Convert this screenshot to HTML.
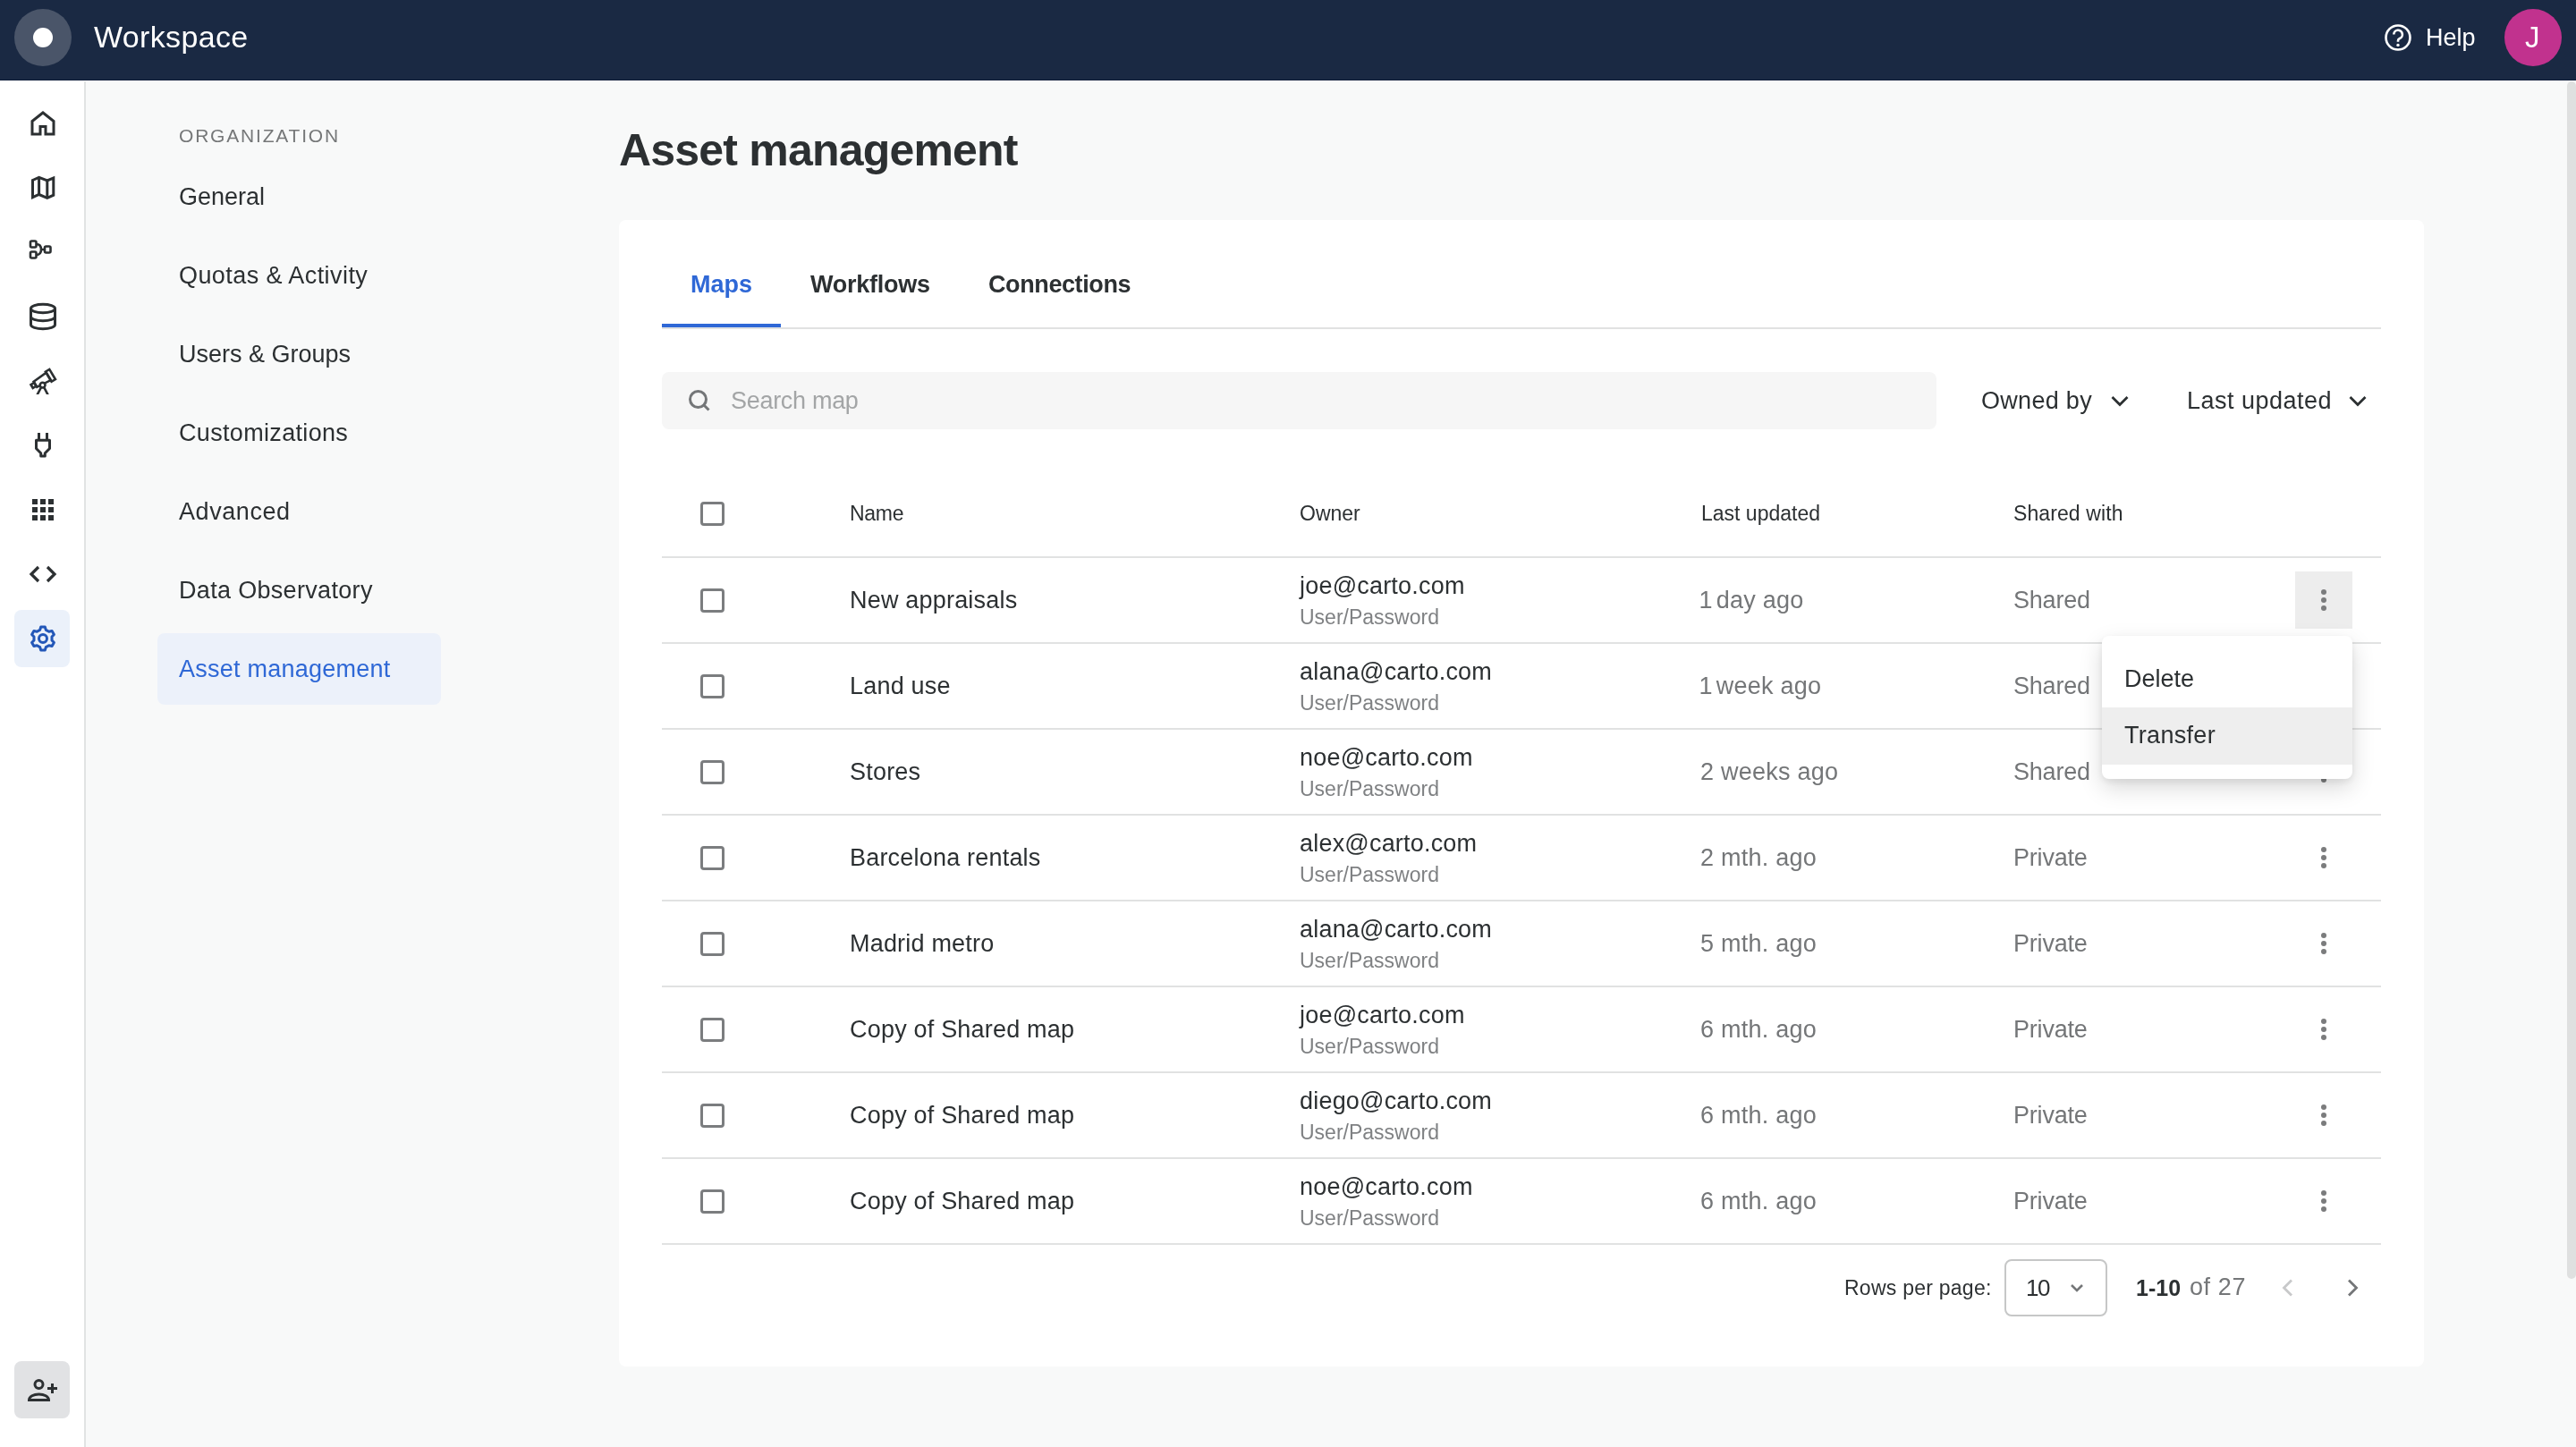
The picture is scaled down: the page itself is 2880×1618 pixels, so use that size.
<!DOCTYPE html><html><head><meta charset="utf-8"><style>
html,body{margin:0;padding:0;width:2880px;height:1618px;overflow:hidden;background:#f8f9f9;font-family:"Liberation Sans",sans-serif;}
@media (max-width:1500px){html{zoom:0.5;}}
.t{position:absolute;white-space:nowrap;will-change:transform;}
.a{position:absolute;}
</style></head><body>
<div class="a" style="left:0;top:0;width:2880px;height:89px;background:#1a2943"></div><div class="a" style="left:0;top:89px;width:2880px;height:1px;background:#0e1c38"></div><div class="a" style="left:0;top:90px;width:2880px;height:1px;background:#ffffff"></div><div class="a" style="left:16px;top:10px;width:64px;height:64px;border-radius:50%;background:#4a5569"></div><div class="a" style="left:37px;top:31px;width:22px;height:22px;border-radius:50%;background:#ffffff"></div><div class="t" style="left:105px;top:24.21px;font-size:34px;line-height:34px;color:#ffffff;letter-spacing:0.35px;">Workspace</div>
<svg class="a" style="left:2660px;top:21px" width="42" height="42" viewBox="0 0 42 42"><circle cx="21" cy="21" r="13.5" fill="none" stroke="#fff" stroke-width="2.6"/><path d="M16.3 17.6a4.8 4.8 0 1 1 6.6 4.4c-1.2.5-1.9 1.3-1.9 2.6v1.1" fill="none" stroke="#fff" stroke-width="2.6"/><circle cx="21" cy="29.4" r="1.7" fill="#fff"/></svg><div class="t" style="left:2712px;top:28.74px;font-size:27px;line-height:27px;color:#ffffff;">Help</div>
<div class="a" style="left:2800px;top:10px;width:64px;height:64px;border-radius:50%;background:#c1328e"></div><div class="t" style="left:2823px;top:25.26px;font-size:33px;line-height:33px;color:#ffffff;">J</div>
<div class="a" style="left:0;top:91px;width:94px;height:1527px;background:#ffffff"></div><div class="a" style="left:94px;top:91px;width:2px;height:1527px;background:#e1e3e3"></div><div class="a" style="left:16px;top:682px;width:62px;height:64px;border-radius:8px;background:#ebf1fa"></div><div class="a" style="left:16px;top:1522px;width:62px;height:64px;border-radius:8px;background:#e1e2e4"></div><svg class="a" style="left:0;top:0" width="96" height="1618" viewBox="0 0 96 1618"><defs><clipPath id="legclip"><rect x="0" y="0" width="96" height="441"/></clipPath></defs>
<g fill="none" stroke="#2c3032" stroke-width="3" stroke-linejoin="miter">
<path d="M36 150V135.5L48 126L60 135.5V150H51V141.5H45V150Z"/>
<path d="M36.5 201.5L43.6 198.3L52.8 202L59.8 199V218.2L52.8 221.3L43.6 217.5L36.5 220.7Z"/>
<path d="M43.6 198.3V217.5M52.8 202V221.3"/>
</g>
<g fill="none" stroke="#2c3032" stroke-width="2.6">
<rect x="34" y="269.5" width="6.5" height="7" rx="1.5"/>
<rect x="34" y="281.5" width="6.5" height="7" rx="1.5"/>
<rect x="50" y="275.5" width="6.5" height="7" rx="1.5"/>
<path d="M40.5 273C44.5 273 46 275.5 46 279C46 282.5 44.5 285 40.5 285M46 279H50"/>
</g>
<g fill="none" stroke="#2c3032" stroke-width="3">
<ellipse cx="48" cy="345" rx="13.5" ry="4.8"/>
<path d="M34.5 345V363c0 2.7 6 4.8 13.5 4.8s13.5-2.1 13.5-4.8V345"/>
<path d="M34.5 354c0 2.7 6 4.8 13.5 4.8s13.5-2.1 13.5-4.8"/>
</g>
<g fill="none" stroke="#2c3032" stroke-width="2.6" stroke-linejoin="miter">
<g transform="translate(48,425) rotate(-31)">
<rect x="-14.2" y="-2.5" width="4.4" height="4.3"/>
<path d="M-9.8 -3.9L7.5 -5.3V4.6L-9.8 3.2Z"/>
<rect x="7.3" y="-6.5" width="5.1" height="12.9"/>
</g>
<circle cx="47.6" cy="430.6" r="2.9" fill="#fff"/>
<path clip-path="url(#legclip)" d="M46 433.2L40.8 443M49.2 433.2L54.4 443"/>
</g>
<g fill="none" stroke="#2c3032" stroke-width="3">
<path d="M43.5 484V492M52.5 484V492"/>
<path d="M40.5 492.3H55.5V501.5L50.3 506.7V510H45.7V506.7L40.5 501.5Z" stroke-linejoin="round"/>
</g>
<g fill="#2c3032">
<rect x="36" y="558" width="6" height="6"/><rect x="45" y="558" width="6" height="6"/><rect x="54" y="558" width="6" height="6"/>
<rect x="36" y="567" width="6" height="6"/><rect x="45" y="567" width="6" height="6"/><rect x="54" y="567" width="6" height="6"/>
<rect x="36" y="576" width="6" height="6"/><rect x="45" y="576" width="6" height="6"/><rect x="54" y="576" width="6" height="6"/>
</g>
<g fill="none" stroke="#2c3032" stroke-width="3.2">
<path d="M43 634L35 642L43 650M53 634L61 642L53 650"/>
</g>
<g fill="none" stroke="#2357b8" stroke-width="3" stroke-linejoin="round"><path d="M44.68 704.36 L45.71 701.00 L50.29 701.00 L51.32 704.36 L54.69 706.30 L58.11 705.52 L60.40 709.49 L58.01 712.05 L58.01 715.95 L60.40 718.51 L58.11 722.48 L54.69 721.70 L51.32 723.64 L50.29 727.00 L45.71 727.00 L44.68 723.64 L41.31 721.70 L37.89 722.48 L35.60 718.51 L37.99 715.95 L37.99 712.05 L35.60 709.49 L37.89 705.52 L41.31 706.30Z"/><circle cx="48" cy="714" r="4.5"/></g>
<g fill="none" stroke="#2c3032" stroke-width="3">
<circle cx="43.5" cy="1548" r="4.5"/>
<path d="M32.5 1565.5c0-4 5-6.5 11-6.5s11 2.5 11 6.5Z"/>
<path d="M53 1552.5h11M58.5 1547v11"/>
</g>
</svg><div class="t" style="left:200px;top:141.22px;font-size:21px;line-height:21px;color:#757778;letter-spacing:1.8px;">ORGANIZATION</div>
<div class="t" style="left:200px;top:206.64px;font-size:27px;line-height:27px;color:#2c3032;letter-spacing:-0.03px;">General</div>
<div class="t" style="left:200px;top:294.64px;font-size:27px;line-height:27px;color:#2c3032;letter-spacing:0.42px;">Quotas &amp; Activity</div>
<div class="t" style="left:200px;top:382.64px;font-size:27px;line-height:27px;color:#2c3032;letter-spacing:-0.01px;">Users &amp; Groups</div>
<div class="t" style="left:200px;top:470.64px;font-size:27px;line-height:27px;color:#2c3032;letter-spacing:0.33px;">Customizations</div>
<div class="t" style="left:200px;top:558.64px;font-size:27px;line-height:27px;color:#2c3032;letter-spacing:0.57px;">Advanced</div>
<div class="t" style="left:200px;top:646.64px;font-size:27px;line-height:27px;color:#2c3032;letter-spacing:0.32px;">Data Observatory</div>
<div class="a" style="left:176px;top:708px;width:317px;height:80px;border-radius:8px;background:#ecf1fa"></div><div class="t" style="left:200px;top:734.64px;font-size:27px;line-height:27px;color:#2f68d6;letter-spacing:0.25px;">Asset management</div>
<div class="t" style="left:692px;top:142.66px;font-size:50px;line-height:50px;color:#2c3032;font-weight:700;letter-spacing:-0.8px;">Asset management</div>
<div class="a" style="left:692px;top:246px;width:2018px;height:1282px;border-radius:8px;background:#ffffff"></div><div class="t" style="left:771.5px;top:305.14px;font-size:27px;line-height:27px;color:#2f68d6;font-weight:700;">Maps</div>
<div class="t" style="left:906px;top:305.14px;font-size:27px;line-height:27px;color:#2c3032;font-weight:700;letter-spacing:-0.25px;">Workflows</div>
<div class="t" style="left:1104.5px;top:305.14px;font-size:27px;line-height:27px;color:#2c3032;font-weight:700;letter-spacing:-0.4px;">Connections</div>
<div class="a" style="left:740px;top:366px;width:1922px;height:2px;background:#e1e2e2"></div><div class="a" style="left:740px;top:362px;width:133px;height:4px;background:#2f68d6"></div><div class="a" style="left:740px;top:416px;width:1425px;height:64px;border-radius:8px;background:#f6f6f6"></div><svg class="a" style="left:760px;top:426px" width="44" height="44" viewBox="0 0 44 44"><circle cx="20.5" cy="20.5" r="9" fill="none" stroke="#747678" stroke-width="3"/><path d="M27 27L32.5 32.5" stroke="#747678" stroke-width="3"/></svg><div class="t" style="left:817px;top:435.14px;font-size:27px;line-height:27px;color:#a3a5a6;letter-spacing:-0.3px;">Search map</div>
<div class="t" style="left:2215px;top:434.94px;font-size:27px;line-height:27px;color:#2c3032;letter-spacing:0.3px;">Owned by</div>
<div class="t" style="left:2445px;top:434.94px;font-size:27px;line-height:27px;color:#2c3032;letter-spacing:0.5px;">Last updated</div>
<svg class="a" style="left:2358px;top:436px" width="24" height="24" viewBox="0 0 24 24"><path d="M3.5 8L12 16.5L20.5 8" fill="none" stroke="#2c3032" stroke-width="2.8"/></svg><svg class="a" style="left:2624px;top:436px" width="24" height="24" viewBox="0 0 24 24"><path d="M3.5 8L12 16.5L20.5 8" fill="none" stroke="#2c3032" stroke-width="2.8"/></svg><div class="a" style="left:783px;top:561px;width:21px;height:21px;border:3px solid #7b7d7f;border-radius:4px"></div><div class="t" style="left:950px;top:563.03px;font-size:23px;line-height:23px;color:#2c3032;letter-spacing:-0.3px;">Name</div>
<div class="t" style="left:1453px;top:563.03px;font-size:23px;line-height:23px;color:#2c3032;">Owner</div>
<div class="t" style="left:1902px;top:563.03px;font-size:23px;line-height:23px;color:#2c3032;">Last updated</div>
<div class="t" style="left:2251px;top:563.03px;font-size:23px;line-height:23px;color:#2c3032;letter-spacing:0.1px;">Shared with</div>
<div class="a" style="left:740px;top:622px;width:1922px;height:2px;background:#e1e2e2"></div><div class="a" style="left:783px;top:657.5px;width:21px;height:21px;border:3px solid #7b7d7f;border-radius:4px"></div><div class="t" style="left:950px;top:657.94px;font-size:27px;line-height:27px;color:#2c3032;letter-spacing:0.2px;">New appraisals</div>
<div class="t" style="left:1453px;top:641.54px;font-size:27px;line-height:27px;color:#2c3032;letter-spacing:0.2px;">joe@carto.com</div>
<div class="t" style="left:1453px;top:678.53px;font-size:23px;line-height:23px;color:#7f8183;">User/Password</div>
<div class="t" style="left:1901px;top:657.94px;font-size:27px;line-height:27px;color:#747678;letter-spacing:0.25px;"><span style="letter-spacing:-3.5px;margin-left:-1.5px">1</span> day ago</div>
<div class="t" style="left:2251px;top:657.94px;font-size:27px;line-height:27px;color:#747678;letter-spacing:-0.2px;">Shared</div>
<div class="a" style="left:2566px;top:639px;width:64px;height:64px;background:#ededed"></div><svg class="a" style="left:2586px;top:647px" width="24" height="48" viewBox="0 0 24 48"><circle cx="12" cy="15" r="3" fill="#7b7c7d"/><circle cx="12" cy="24" r="3" fill="#7b7c7d"/><circle cx="12" cy="33" r="3" fill="#7b7c7d"/></svg><div class="a" style="left:740px;top:718px;width:1922px;height:2px;background:#e1e2e2"></div><div class="a" style="left:783px;top:753.5px;width:21px;height:21px;border:3px solid #7b7d7f;border-radius:4px"></div><div class="t" style="left:950px;top:753.94px;font-size:27px;line-height:27px;color:#2c3032;letter-spacing:0.2px;">Land use</div>
<div class="t" style="left:1453px;top:737.54px;font-size:27px;line-height:27px;color:#2c3032;letter-spacing:0.2px;">alana@carto.com</div>
<div class="t" style="left:1453px;top:774.53px;font-size:23px;line-height:23px;color:#7f8183;">User/Password</div>
<div class="t" style="left:1901px;top:753.94px;font-size:27px;line-height:27px;color:#747678;letter-spacing:0.25px;"><span style="letter-spacing:-3.5px;margin-left:-1.5px">1</span> week ago</div>
<div class="t" style="left:2251px;top:753.94px;font-size:27px;line-height:27px;color:#747678;letter-spacing:-0.2px;">Shared</div>
<svg class="a" style="left:2586px;top:743px" width="24" height="48" viewBox="0 0 24 48"><circle cx="12" cy="15" r="3" fill="#7b7c7d"/><circle cx="12" cy="24" r="3" fill="#7b7c7d"/><circle cx="12" cy="33" r="3" fill="#7b7c7d"/></svg><div class="a" style="left:740px;top:814px;width:1922px;height:2px;background:#e1e2e2"></div><div class="a" style="left:783px;top:849.5px;width:21px;height:21px;border:3px solid #7b7d7f;border-radius:4px"></div><div class="t" style="left:950px;top:849.94px;font-size:27px;line-height:27px;color:#2c3032;letter-spacing:0.2px;">Stores</div>
<div class="t" style="left:1453px;top:833.54px;font-size:27px;line-height:27px;color:#2c3032;letter-spacing:0.2px;">noe@carto.com</div>
<div class="t" style="left:1453px;top:870.53px;font-size:23px;line-height:23px;color:#7f8183;">User/Password</div>
<div class="t" style="left:1901px;top:849.94px;font-size:27px;line-height:27px;color:#747678;letter-spacing:0.25px;">2 weeks ago</div>
<div class="t" style="left:2251px;top:849.94px;font-size:27px;line-height:27px;color:#747678;letter-spacing:-0.2px;">Shared</div>
<svg class="a" style="left:2586px;top:839px" width="24" height="48" viewBox="0 0 24 48"><circle cx="12" cy="15" r="3" fill="#7b7c7d"/><circle cx="12" cy="24" r="3" fill="#7b7c7d"/><circle cx="12" cy="33" r="3" fill="#7b7c7d"/></svg><div class="a" style="left:740px;top:910px;width:1922px;height:2px;background:#e1e2e2"></div><div class="a" style="left:783px;top:945.5px;width:21px;height:21px;border:3px solid #7b7d7f;border-radius:4px"></div><div class="t" style="left:950px;top:945.94px;font-size:27px;line-height:27px;color:#2c3032;letter-spacing:0.2px;">Barcelona rentals</div>
<div class="t" style="left:1453px;top:929.54px;font-size:27px;line-height:27px;color:#2c3032;letter-spacing:0.2px;">alex@carto.com</div>
<div class="t" style="left:1453px;top:966.53px;font-size:23px;line-height:23px;color:#7f8183;">User/Password</div>
<div class="t" style="left:1901px;top:945.94px;font-size:27px;line-height:27px;color:#747678;letter-spacing:0.25px;">2 mth. ago</div>
<div class="t" style="left:2251px;top:945.94px;font-size:27px;line-height:27px;color:#747678;letter-spacing:-0.2px;">Private</div>
<svg class="a" style="left:2586px;top:935px" width="24" height="48" viewBox="0 0 24 48"><circle cx="12" cy="15" r="3" fill="#7b7c7d"/><circle cx="12" cy="24" r="3" fill="#7b7c7d"/><circle cx="12" cy="33" r="3" fill="#7b7c7d"/></svg><div class="a" style="left:740px;top:1006px;width:1922px;height:2px;background:#e1e2e2"></div><div class="a" style="left:783px;top:1041.5px;width:21px;height:21px;border:3px solid #7b7d7f;border-radius:4px"></div><div class="t" style="left:950px;top:1041.94px;font-size:27px;line-height:27px;color:#2c3032;letter-spacing:0.2px;">Madrid metro</div>
<div class="t" style="left:1453px;top:1025.54px;font-size:27px;line-height:27px;color:#2c3032;letter-spacing:0.2px;">alana@carto.com</div>
<div class="t" style="left:1453px;top:1062.53px;font-size:23px;line-height:23px;color:#7f8183;">User/Password</div>
<div class="t" style="left:1901px;top:1041.94px;font-size:27px;line-height:27px;color:#747678;letter-spacing:0.25px;">5 mth. ago</div>
<div class="t" style="left:2251px;top:1041.94px;font-size:27px;line-height:27px;color:#747678;letter-spacing:-0.2px;">Private</div>
<svg class="a" style="left:2586px;top:1031px" width="24" height="48" viewBox="0 0 24 48"><circle cx="12" cy="15" r="3" fill="#7b7c7d"/><circle cx="12" cy="24" r="3" fill="#7b7c7d"/><circle cx="12" cy="33" r="3" fill="#7b7c7d"/></svg><div class="a" style="left:740px;top:1102px;width:1922px;height:2px;background:#e1e2e2"></div><div class="a" style="left:783px;top:1137.5px;width:21px;height:21px;border:3px solid #7b7d7f;border-radius:4px"></div><div class="t" style="left:950px;top:1137.94px;font-size:27px;line-height:27px;color:#2c3032;letter-spacing:0.2px;">Copy of Shared map</div>
<div class="t" style="left:1453px;top:1121.54px;font-size:27px;line-height:27px;color:#2c3032;letter-spacing:0.2px;">joe@carto.com</div>
<div class="t" style="left:1453px;top:1158.53px;font-size:23px;line-height:23px;color:#7f8183;">User/Password</div>
<div class="t" style="left:1901px;top:1137.94px;font-size:27px;line-height:27px;color:#747678;letter-spacing:0.25px;">6 mth. ago</div>
<div class="t" style="left:2251px;top:1137.94px;font-size:27px;line-height:27px;color:#747678;letter-spacing:-0.2px;">Private</div>
<svg class="a" style="left:2586px;top:1127px" width="24" height="48" viewBox="0 0 24 48"><circle cx="12" cy="15" r="3" fill="#7b7c7d"/><circle cx="12" cy="24" r="3" fill="#7b7c7d"/><circle cx="12" cy="33" r="3" fill="#7b7c7d"/></svg><div class="a" style="left:740px;top:1198px;width:1922px;height:2px;background:#e1e2e2"></div><div class="a" style="left:783px;top:1233.5px;width:21px;height:21px;border:3px solid #7b7d7f;border-radius:4px"></div><div class="t" style="left:950px;top:1233.94px;font-size:27px;line-height:27px;color:#2c3032;letter-spacing:0.2px;">Copy of Shared map</div>
<div class="t" style="left:1453px;top:1217.54px;font-size:27px;line-height:27px;color:#2c3032;letter-spacing:0.2px;">diego@carto.com</div>
<div class="t" style="left:1453px;top:1254.53px;font-size:23px;line-height:23px;color:#7f8183;">User/Password</div>
<div class="t" style="left:1901px;top:1233.94px;font-size:27px;line-height:27px;color:#747678;letter-spacing:0.25px;">6 mth. ago</div>
<div class="t" style="left:2251px;top:1233.94px;font-size:27px;line-height:27px;color:#747678;letter-spacing:-0.2px;">Private</div>
<svg class="a" style="left:2586px;top:1223px" width="24" height="48" viewBox="0 0 24 48"><circle cx="12" cy="15" r="3" fill="#7b7c7d"/><circle cx="12" cy="24" r="3" fill="#7b7c7d"/><circle cx="12" cy="33" r="3" fill="#7b7c7d"/></svg><div class="a" style="left:740px;top:1294px;width:1922px;height:2px;background:#e1e2e2"></div><div class="a" style="left:783px;top:1329.5px;width:21px;height:21px;border:3px solid #7b7d7f;border-radius:4px"></div><div class="t" style="left:950px;top:1329.94px;font-size:27px;line-height:27px;color:#2c3032;letter-spacing:0.2px;">Copy of Shared map</div>
<div class="t" style="left:1453px;top:1313.54px;font-size:27px;line-height:27px;color:#2c3032;letter-spacing:0.2px;">noe@carto.com</div>
<div class="t" style="left:1453px;top:1350.53px;font-size:23px;line-height:23px;color:#7f8183;">User/Password</div>
<div class="t" style="left:1901px;top:1329.94px;font-size:27px;line-height:27px;color:#747678;letter-spacing:0.25px;">6 mth. ago</div>
<div class="t" style="left:2251px;top:1329.94px;font-size:27px;line-height:27px;color:#747678;letter-spacing:-0.2px;">Private</div>
<svg class="a" style="left:2586px;top:1319px" width="24" height="48" viewBox="0 0 24 48"><circle cx="12" cy="15" r="3" fill="#7b7c7d"/><circle cx="12" cy="24" r="3" fill="#7b7c7d"/><circle cx="12" cy="33" r="3" fill="#7b7c7d"/></svg><div class="a" style="left:740px;top:1390px;width:1922px;height:2px;background:#e1e2e2"></div><div class="a" style="left:2350px;top:711px;width:280px;height:160px;border-radius:8px;background:#fff;box-shadow:0 10px 26px rgba(0,0,0,0.15),0 3px 8px rgba(0,0,0,0.08);overflow:hidden"><div style="position:absolute;left:0;top:80px;width:280px;height:64px;background:#eeeeee"></div></div><div class="t" style="left:2375px;top:745.64px;font-size:27px;line-height:27px;color:#2c3032;">Delete</div>
<div class="t" style="left:2375px;top:809.14px;font-size:27px;line-height:27px;color:#2c3032;letter-spacing:0.3px;">Transfer</div>
<div class="t" style="left:2062px;top:1428.53px;font-size:23px;line-height:23px;color:#2c3032;letter-spacing:0.25px;">Rows per page:</div>
<div class="a" style="left:2241px;top:1408px;width:111px;height:60px;border:2px solid #c6c7c7;border-radius:8px"></div><div class="t" style="left:2264.5px;top:1426.99px;font-size:26px;line-height:26px;color:#2c3032;letter-spacing:-1.5px;">10</div>
<svg class="a" style="left:2312px;top:1430px" width="20" height="20" viewBox="0 0 20 20"><path d="M4 7L10 13L16 7" fill="none" stroke="#747678" stroke-width="2.6"/></svg><div class="t" style="left:2388px;top:1427.83px;font-size:25px;line-height:25px;color:#2c3032;font-weight:700;">1-10</div>
<div class="t" style="left:2448px;top:1426.14px;font-size:27px;line-height:27px;color:#747678;letter-spacing:0.6px;">of 27</div>
<svg class="a" style="left:2546px;top:1428px" width="24" height="24" viewBox="0 0 24 24"><path d="M16 3.5L7.5 12L16 20.5" fill="none" stroke="#c8c9ca" stroke-width="2.8"/></svg><svg class="a" style="left:2618px;top:1428px" width="24" height="24" viewBox="0 0 24 24"><path d="M8 3.5L16.5 12L8 20.5" fill="none" stroke="#747678" stroke-width="2.8"/></svg><div class="a" style="left:2870px;top:91px;width:10px;height:1339px;border-radius:5px;background:#dfe0e0"></div></body></html>
